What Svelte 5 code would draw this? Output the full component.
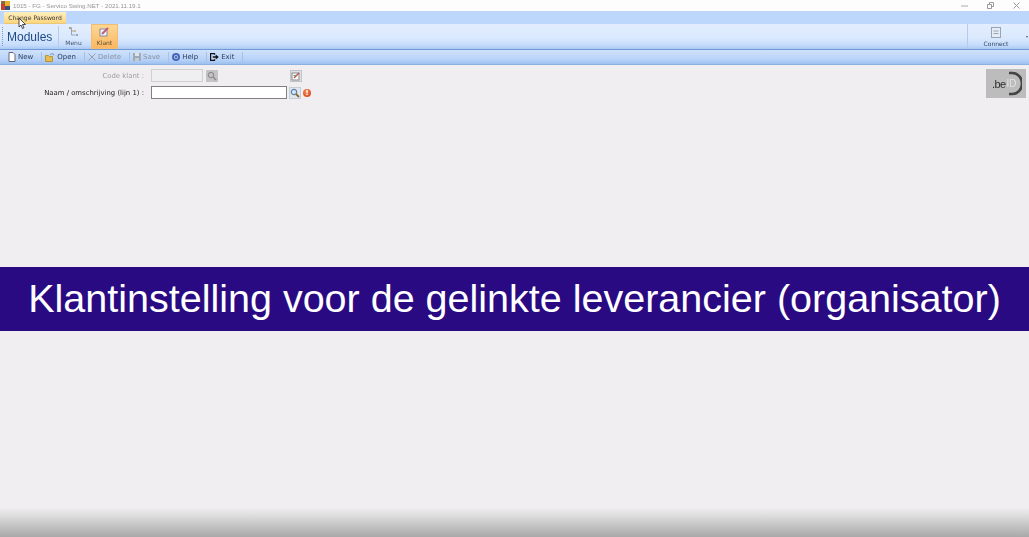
<script>
  const tools = [
    { id: 'new', label: 'New' },
    { id: 'open', label: 'Open' },
    { id: 'delete', label: 'Delete', off: true },
    { id: 'save', label: 'Save', off: true },
    { id: 'help', label: 'Help' },
    { id: 'exit', label: 'Exit' }
  ];
</script>

<div class="page">
  <header class="chrome">
    <div class="titlebar">
      <svg class="appicon" width="9" height="9" viewBox="0 0 9 9"><rect x="0" y="3" width="4" height="6" fill="#c8402a"/><rect x="4" y="0" width="5" height="5" fill="#e8b030"/><rect x="4" y="5" width="5" height="4" fill="#35507a"/><rect x="0" y="0" width="4" height="3" fill="#8a6a40"/></svg>
      <span class="title">1015 - FG - Servico Swing.NET - 2021.11.19.1</span>
      <div class="winbtns">
        <svg width="7" height="7" viewBox="0 0 7 7"><path d="M0 4h7" stroke="#aaa" fill="none"/></svg>
        <svg width="7" height="7" viewBox="0 0 7 7"><path d="M.5 2.500h4v4h-4zM2.500 2.500v-2h4v4h-2" stroke="#999" fill="none"/></svg>
        <svg width="7" height="7" viewBox="0 0 7 7"><path d="M.5.5l6 6M6.500.5l-6 6" stroke="#999" fill="none"/></svg>
      </div>
    </div>

    <div class="menustrip">
      <span class="menuitem">Change Password</span>
    </div>

    <div class="ribbon">
      <span class="grip"></span>
      <span class="modules">Modules</span>
      <span class="sep"></span>
      <div class="rbtn">
        <svg width="11" height="10" viewBox="0 0 11 10"><path d="M2 1h2M3.500 1v7M3.500 4h3M3.500 8h4" stroke="#8a92a0" stroke-width=".8" fill="none"/><rect x="1" y="0" width="2" height="2" fill="#a3a38c"/><rect x="6" y="3" width="2" height="2" fill="#d4bb85"/><rect x="8" y="7" width="2" height="2" fill="#90a8c4"/></svg>
        <span>Menu</span>
      </div>
      <div class="rbtn active">
        <svg width="11" height="10" viewBox="0 0 11 10"><rect x="1" y="2" width="7" height="7" fill="#eef1f6" stroke="#6b7a9c" stroke-width=".8"/><path d="M3 7l6-6" stroke="#c2557e" stroke-width="1.800"/></svg>
        <span>Klant</span>
      </div>
      <div class="rbtn connect">
        <svg width="10" height="11" viewBox="0 0 10 11"><rect x=".5" y=".5" width="9" height="10" fill="#e6ecf5" stroke="#9aa3b2"/><path d="M2.500 4h5M2.500 6.500h5" stroke="#9aa3b2"/></svg>
        <span>Connect</span>
      </div>
      <span class="caret"></span>
    </div>

    <div class="toolbar">
      <span class="grip small"></span>
      {#each tools as t}
        <div class="tool" class:off={t.off}>
          {#if t.id === 'new'}
            <svg width="8" height="10" viewBox="0 0 8 10"><path d="M1 .5h4l2 2v7H1z" fill="#fff" stroke="#667"/></svg>
          {:else if t.id === 'open'}
            <svg width="10" height="9" viewBox="0 0 10 9"><path d="M.5 2.500h3l1 1h3v5h-7z" fill="#e8bd50" stroke="#b8923c"/><path d="M5 1.500l3-1 1 2" stroke="#7a9cc8" fill="none"/></svg>
          {:else if t.id === 'delete'}
            <svg width="8" height="8" viewBox="0 0 8 8"><path d="M.5.5l7 7M7.500.5l-7 7" stroke="#9aa0aa" stroke-width="1"/></svg>
          {:else if t.id === 'save'}
            <svg width="8" height="8" viewBox="0 0 8 8"><rect width="8" height="8" fill="#a0a9b8"/><rect x="2" y="0" width="4" height="3" fill="#dfe4ea"/><rect x="2" y="5" width="4" height="3" fill="#c5ccd6"/></svg>
          {:else if t.id === 'help'}
            <svg width="8" height="8" viewBox="0 0 8 8"><circle cx="4" cy="4" r="4" fill="#4468bb"/><circle cx="4" cy="4" r="2" fill="#b4c8ee"/><circle cx="4" cy="4" r=".9" fill="#28427f"/></svg>
          {:else}
            <svg width="9" height="8" viewBox="0 0 9 8"><path d="M4.500 1.800V.6H.6v6.800h3.900V6.200" stroke="#111" stroke-width="1.200" fill="none"/><path d="M2.800 3.200h2.900V1.600L8.800 4 5.700 6.400V4.800H2.800z" fill="#111"/></svg>
          {/if}
          <span>{t.label}</span>
        </div>
        <span class="toolsep"></span>
      {/each}
    </div>
  </header>

  <main class="content">
    <div class="logo">
      <span class="be">.be</span><span class="id">ID</span>
      <svg class="arc" width="14" height="25" viewBox="0 0 14 25"><path d="M1 2h3.500a9.500 10.500 0 0 1 0 21H1" fill="none" stroke="#444" stroke-width="2.600"/></svg>
    </div>
    <div class="form">
      <label class="off" for="code">Code klant :</label>
      <div class="row">
        <input id="code" class="code" disabled />
        <span class="search disabled">
          <svg width="10" height="10" viewBox="0 0 10 10"><circle cx="4" cy="4" r="2.700" fill="none" stroke="#8e8e8e" stroke-width="1.200"/><path d="M6 6l3 3" stroke="#8e8e8e" stroke-width="1.600"/></svg>
        </span>
        <span class="edit">
          <svg width="10" height="10" viewBox="0 0 10 10"><rect x="1" y="2" width="7" height="7" fill="#fff" stroke="#888"/><path d="M3 7l5-5" stroke="#b85050" stroke-width="1.500"/><path d="M2.500 4.500h3" stroke="#6aa060"/></svg>
        </span>
      </div>
      <label for="naam">Naam / omschrijving (lijn 1) :</label>
      <div class="row">
        <input id="naam" class="naam" />
        <span class="search">
          <svg width="10" height="10" viewBox="0 0 10 10"><circle cx="4" cy="4" r="2.700" fill="#d5e6f5" stroke="#5a82a6" stroke-width="1.200"/><path d="M6 6l3 3" stroke="#8a6a2a" stroke-width="1.800"/></svg>
        </span>
        <span class="warn">!</span>
      </div>
    </div>
  </main>

  <div class="banner">Klantinstelling voor de gelinkte leverancier (organisator)</div>

  <div class="rest"></div>

  <svg class="cursor" width="9" height="13" viewBox="0 0 9 13"><path d="M1 1v9l2-2 1.500 3.500 1.500-.7L4.500 7.500H7.500z" fill="#fff" stroke="#222" stroke-width=".8"/></svg>
</div>

<style>
  :global(body) {
    background: #f0eef0;
  }
  .page {
    position: relative;
    width: 1029px;
    height: 537px;
    display: flex;
    flex-direction: column;
    overflow: hidden;
    font-family: "Liberation Sans", Arial, sans-serif;
    background: #f0eef0;
  }
  .chrome {
    flex: none;
    filter: blur(0.4px);
    font-family: "DejaVu Sans", sans-serif;
  }
  .titlebar {
    height: 11px;
    display: flex;
    align-items: center;
    padding-left: 1px;
    background: #fdfdfd;
    font-family: "Liberation Sans", Arial, sans-serif;
    font-size: 6.200px;
    color: #969696;
  }
  .appicon {
    margin-right: 3px;
  }
  .winbtns {
    margin-left: auto;
    display: flex;
    gap: 19px;
    padding-right: 9px;
  }
  .menustrip {
    height: 13px;
    padding-left: 4px;
    background: #bcd7fb;
    display: flex;
    align-items: center;
  }
  .menuitem {
    height: 11px;
    width: 62px;
    font-size: 6.100px;
    line-height: 11px;
    text-align: center;
    color: #333a46;
    background: linear-gradient(#fff0c0, #fdd67c);
    border-bottom: 1px solid #e8c878;
  }
  .ribbon {
    height: 26px;
    display: flex;
    align-items: stretch;
    padding-left: 2px;
    background: linear-gradient(#e2eeff 0%, #dbe9fd 55%, #c5dcfb 85%, #a9c8f2 100%);
    border-bottom: 1px solid #6f9ad3;
    box-sizing: border-box;
  }
  .grip {
    width: 1px;
    margin: 3px 0;
    border-left: 1px dotted #7b98c2;
  }
  .grip.small {
    margin: 2px 1px 2px 1px;
  }
  .modules {
    margin-left: 3px;
    width: 51px;
    font-family: "Liberation Sans", Arial, sans-serif;
    font-size: 12px;
    line-height: 26px;
    color: #1c4a86;
  }
  .sep {
    width: 1px;
    margin: 2px 0;
    background: #b4cbe9;
  }
  .rbtn {
    width: 27px;
    margin-left: 1px;
    display: flex;
    flex-direction: column;
    align-items: center;
    justify-content: center;
    gap: 2px;
    font-size: 6px;
    color: #44566f;
  }
  .rbtn.active {
    margin-left: 4px;
    color: #5a4a30;
    background: linear-gradient(#fdd792, #fbb763);
    border: 1px solid #f2bd72;
    box-sizing: border-box;
  }
  .rbtn.connect {
    width: 56px;
    margin-left: auto;
    border-left: 1px solid #b4cbe9;
    color: #344a68;
  }
  .caret {
    width: 0;
    height: 0;
    margin: 12px 1px 0 2px;
    border: 1.500px solid transparent;
    border-top: 2px solid #4a5d78;
  }
  .toolbar {
    height: 15px;
    display: flex;
    align-items: center;
    padding-left: 1px;
    background: linear-gradient(#cfe2fc, #b7d2f8 70%, #9dc0ef);
    border-bottom: 1px solid #8db1e2;
    box-sizing: border-box;
    font-size: 7px;
    color: #2b3d5c;
  }
  .tool {
    display: flex;
    align-items: center;
    gap: 2px;
    padding: 0 8px 0 3px;
  }
  .tool.off {
    color: #8a93a3;
  }
  .toolsep {
    width: 1px;
    height: 10px;
    background: #a7c1e4;
  }
  .content {
    position: relative;
    flex: none;
    height: 202px;
    box-sizing: border-box;
    padding-top: 4px;
    font-family: "DejaVu Sans", sans-serif;
    font-size: 6.900px;
    color: #222;
  }
  .form {
    display: grid;
    grid-template-columns: 144px auto;
    justify-content: start;
    row-gap: 4px;
    align-items: center;
  }
  label {
    justify-self: end;
    white-space: nowrap;
    filter: blur(0.3px);
  }
  label.off {
    color: #a0a0a0;
  }
  .row {
    display: flex;
    align-items: center;
    margin-left: 7px;
  }
  input {
    box-sizing: border-box;
    height: 13px;
    padding: 0;
    border: 1px solid #808080;
    background: #fff;
  }
  .code {
    width: 52px;
    border-color: #d0d0d0;
    background: #efeef0;
    margin-right: 3px;
  }
  .naam {
    width: 136px;
    margin-right: 2px;
  }
  .search {
    width: 12px;
    height: 12px;
    display: flex;
    align-items: center;
    justify-content: center;
    background: #e2e6ee;
    border: 1px solid #c7cdd7;
    box-sizing: border-box;
  }
  .search.disabled {
    background: #c4c4c4;
    border-color: #c4c4c4;
  }
  .edit {
    width: 12px;
    height: 12px;
    margin-left: 72px;
    display: flex;
    align-items: center;
    justify-content: center;
    background: #dfe1e6;
    border: 1px solid #c0c3ca;
    box-sizing: border-box;
  }
  .warn {
    width: 8px;
    height: 8px;
    margin-left: 2px;
    border-radius: 50%;
    background: radial-gradient(circle at 40% 35%, #f08a50, #d03a15);
    color: #fff;
    font-size: 7px;
    font-weight: bold;
    line-height: 8px;
    text-align: center;
  }
  .logo {
    position: absolute;
    top: 4px;
    right: 3px;
    width: 40px;
    height: 29px;
    background: #bdbcbc;
    display: flex;
    align-items: center;
    padding-left: 6px;
    box-sizing: border-box;
    font-family: "Liberation Sans", Arial, sans-serif;
    font-size: 11px;
    filter: blur(0.3px);
  }
  .be {
    color: #2e2e2e;
    letter-spacing: -0.6px;
  }
  .id {
    color: #e2e2e2;
    margin-left: 1px;
    font-size: 10px;
  }
  .arc {
    position: absolute;
    right: 4px;
    top: 2px;
  }
  .banner {
    flex: none;
    height: 64px;
    background: #2a0a82;
    color: #fff;
    font-size: 39.500px;
    line-height: 63px;
    text-align: center;
    white-space: nowrap;
  }
  .rest {
    flex: 1;
    background: linear-gradient(#f0eef0 0, #f0eef0 176px, #e0dfe0 184px, #c4c3c4 195px, #a9a9a9 100%);
  }
  .cursor {
    position: absolute;
    left: 18px;
    top: 17px;
  }
</style>
